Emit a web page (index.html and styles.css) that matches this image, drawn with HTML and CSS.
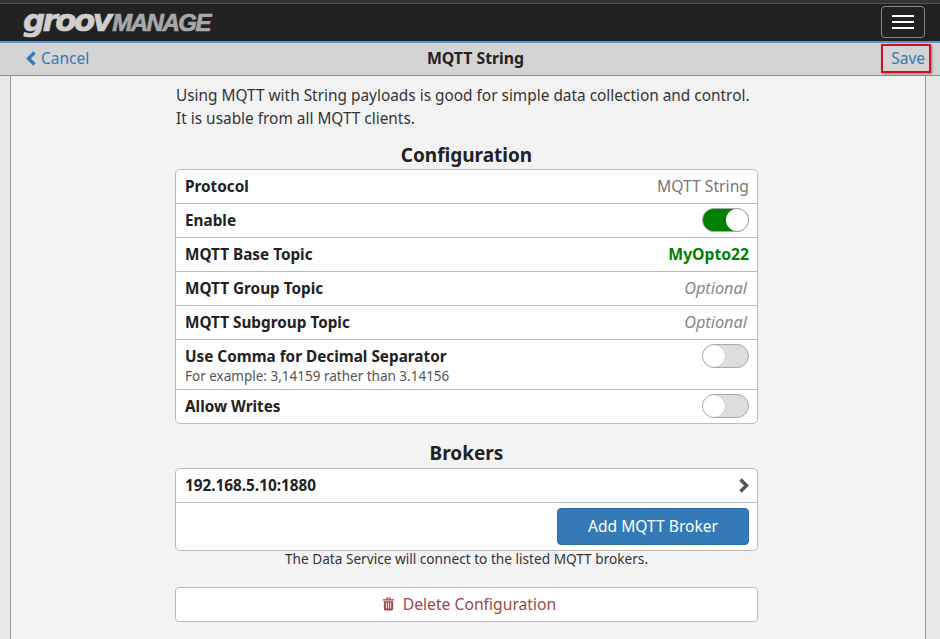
FILE: index.html
```html
<!DOCTYPE html>
<html lang="en">
<head>
<meta charset="utf-8">
<title>MQTT String</title>
<link rel="stylesheet" href="styles.css">
</head>
<body>
<header class="topbar">
  <div class="logo"><span class="logo-groov">groov</span><span class="logo-manage">MANAGE</span></div>
  <button class="menu-btn" aria-label="Menu"><span></span><span></span><span></span></button>
</header>
<nav class="subbar">
  <a class="cancel"><svg class="chev-left" viewBox="0 0 11 15" width="11" height="15"><path d="M8.500 1.500 L2.500 7.500 L8.500 13.500" fill="none" stroke="#337ab7" stroke-width="3.400"/></svg>Cancel</a>
  <div class="title">MQTT String</div>
  <a class="save">Save</a>
</nav>
<main class="panel">
  <div class="content">
    <p class="intro">Using MQTT with String payloads is good for simple data collection and control.<br>It is usable from all MQTT clients.</p>
    <h2 class="heading">Configuration</h2>
    <div class="card">
      <div class="row"><span class="label">Protocol</span><span class="value">MQTT String</span></div>
      <div class="row"><span class="label">Enable</span><span class="toggle on"></span></div>
      <div class="row"><span class="label">MQTT Base Topic</span><span class="value green">MyOpto22</span></div>
      <div class="row"><span class="label">MQTT Group Topic</span><span class="value optional">Optional</span></div>
      <div class="row"><span class="label">MQTT Subgroup Topic</span><span class="value optional">Optional</span></div>
      <div class="row tall"><div class="stack"><div class="label">Use Comma for Decimal Separator</div><div class="hint">For example: 3,14159 rather than 3.14156</div></div><span class="toggle"></span></div>
      <div class="row"><span class="label">Allow Writes</span><span class="toggle"></span></div>
    </div>
    <h2 class="heading brokers">Brokers</h2>
    <div class="card">
      <div class="row"><span class="label">192.168.5.10:1880</span><svg viewBox="0 0 11 15" width="11" height="15"><path d="M2.500 1.500 L8.500 7.500 L2.500 13.500" fill="none" stroke="#555" stroke-width="3.400"/></svg></div>
      <div class="row action"><button class="add-btn">Add MQTT Broker</button></div>
    </div>
    <p class="note">The Data Service will connect to the listed MQTT brokers.</p>
    <button class="delete-btn"><svg viewBox="0 0 14 15" width="13" height="15"><path d="M1 3h12v1.400H1z M4.500 1h5v2H8.500V2h-3v1h-1z M2 5h10v8.500a1.500 1.500 0 0 1-1.500 1.500h-7A1.500 1.500 0 0 1 2 13.500z" fill="#a0474a"/><path d="M4.700 6.500v6.500M7 6.500v6.500M9.300 6.500v6.500" stroke="#fff" stroke-width="1"/></svg>Delete Configuration</button>
  </div>
</main>
</body>
</html>
```
FILE: styles.css
```css
* { box-sizing: border-box; }
html, body { margin: 0; height: 100%; overflow: hidden; }
body {
  font-family: "Noto Sans", "Open Sans", sans-serif;
  font-size: 15px;
  color: #333;
  background: #e9e9e9;
  display: flex;
  flex-direction: column;
}
.topbar {
  height: 43px;
  flex: none;
  background: #222;
  border-top: 3px solid #333;
  border-bottom: 2px solid #5b93d3;
  box-shadow: inset 0 1px 0 #555;
  display: flex;
  align-items: center;
  justify-content: space-between;
  padding: 0 15px 0 23px;
}
.logo { display: flex; align-items: baseline; font-style: italic; font-weight: 700; line-height: 1; margin-top: -3px; }
.logo-groov {
  font-family: "DejaVu Sans", sans-serif;
  font-size: 31px;
  letter-spacing: -2.600px;
  font-weight: 700;
  color: #cfcfcf;
  -webkit-text-stroke: 0.700px #cfcfcf;
}
.logo-manage {
  font-family: "Liberation Sans", sans-serif;
  font-size: 24px;
  letter-spacing: -1.500px;
  margin-left: 2px;
  color: #a8a8a8;
  -webkit-text-stroke: 0.700px #a8a8a8;
}
.menu-btn {
  width: 44px;
  height: 32px;
  padding: 0;
  background: transparent;
  border: 1px solid #888;
  border-radius: 4px;
  display: flex;
  flex-direction: column;
  align-items: center;
  justify-content: center;
  gap: 4px;
}
.menu-btn span { display: block; width: 22px; height: 2px; background: #fff; }
.subbar {
  height: 33px;
  flex: none;
  background: #d4d4d4;
  border-bottom: 1px solid #8c8c8c;
  display: grid;
  grid-template-columns: 1fr auto 1fr;
  align-items: center;
  padding: 0 15px 2px 26px;
}
.cancel { color: #337ab7; display: flex; align-items: center; gap: 4px; font-size: 15.500px; }
.title { font-weight: 700; font-size: 15.800px; color: #222; }
.save {
  justify-self: end;
  color: #337ab7;
  font-size: 15.500px;
  position: relative;
}
.save::after {
  content: "";
  position: absolute;
  left: -10px;
  right: -6px;
  top: -3px;
  bottom: -4px;
  border: 2px solid #d0101e;
  box-shadow: 1px 1px 2px rgba(0,0,0,.4);
}
.panel {
  flex: 1;
  margin: 0 14px 0 10px;
  background: #f3f3f3;
  border-left: 1px solid #9a9a9a;
  border-right: 1px solid #9a9a9a;
  display: flex;
  justify-content: center;
  min-height: 0;
}
.content { width: 583px; margin-left: -3px; padding-top: 8px; }
.intro { margin: 0; line-height: 23px; font-size: 15.400px; padding-left: 1px; white-space: nowrap; }
.heading { margin: 12px 0 1px; font-size: 19px; line-height: 26px; font-weight: 700; text-align: center; color: #222; }
.heading.brokers { margin: 16px 0 2px; }
.card {
  background: #fff;
  border: 1px solid #bbb;
  border-radius: 5px;
}
.row {
  min-height: 34px;
  display: flex;
  align-items: center;
  justify-content: space-between;
  padding: 0 8px 1px 9px;
  border-top: 1px solid #bbb;
}
.row:first-child { border-top: 0; min-height: 33px; }
.row.tall { min-height: 50px; align-items: flex-start; padding-top: 4px; }
.stack { margin-top: 2px; }
.label { font-weight: 700; color: #222; font-size: 15.300px; line-height: 20px; }
.hint { font-size: 13.500px; line-height: 16px; color: #555; margin-top: 2px; }
.value { font-size: 15.700px; color: #777; }
.value.green { color: #008000; font-weight: 700; }
.value.optional { font-style: italic; color: #888; font-size: 16.300px; padding: 0 2px 1px 0; }
.toggle {
  width: 47px;
  height: 24px;
  border-radius: 12px;
  background: #ddd;
  border: 1px solid #aaa;
  position: relative;
  flex: none;
}
.toggle::after {
  content: "";
  position: absolute;
  left: 0;
  top: 0;
  width: 22px;
  height: 22px;
  border-radius: 50%;
  background: #fff;
  box-shadow: 0 0 1px #888;
}
.toggle.on { background: #008000; border-color: #aaa; }
.toggle.on::after { left: auto; right: 0; }
.row.action { justify-content: flex-end; min-height: 48px; padding-bottom: 1px; }
.add-btn {
  width: 192px;
  height: 37px;
  background: #337ab7;
  border: 1px solid #2e6da4;
  border-radius: 4px;
  color: #fff;
  font: inherit;
  font-size: 15.600px;
}
.note { margin: 0; text-align: center; font-size: 13.650px; line-height: 16px; color: #333; }
.delete-btn {
  display: flex;
  align-items: center;
  justify-content: center;
  gap: 8px;
  width: 100%;
  height: 35px;
  margin-top: 20px;
  background: #fff;
  border: 1px solid #bbb;
  border-radius: 4px;
  color: #a0474a;
  font: inherit;
  font-size: 15.700px;
  padding: 0 0 2px 5px;
}
```
